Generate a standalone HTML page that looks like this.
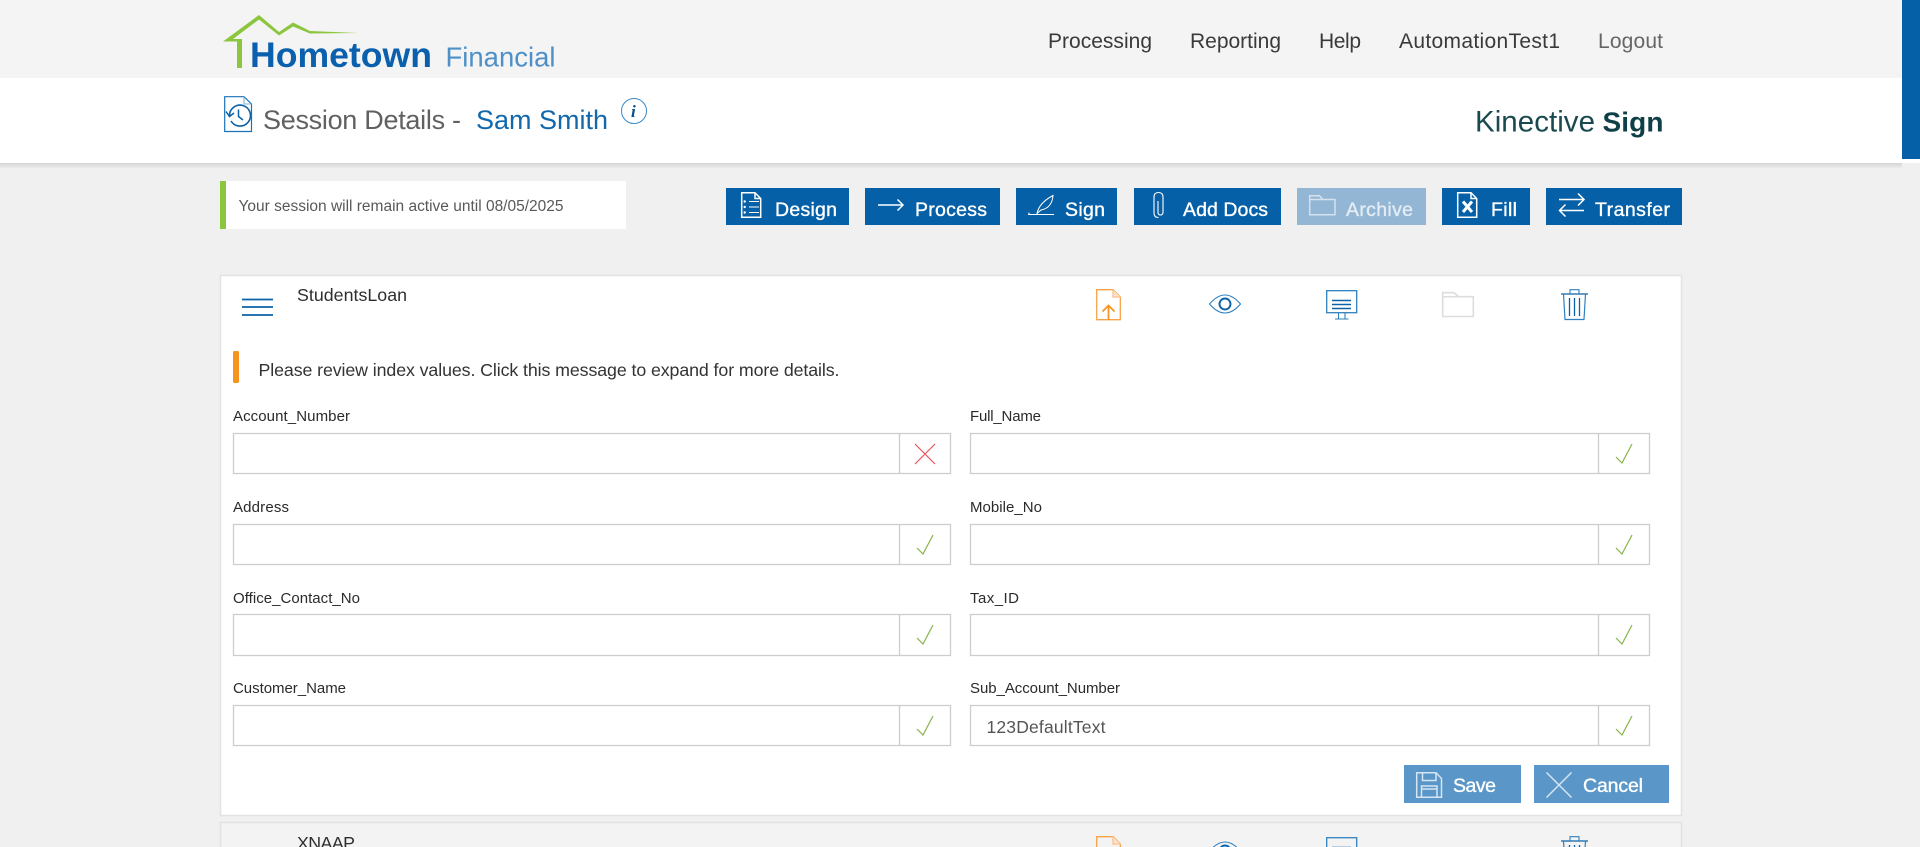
<!DOCTYPE html>
<html lang="en"><head><meta charset="utf-8"><title>Session Details - Sam Smith</title>
<style>
html,body{margin:0;padding:0;width:1920px;height:847px;overflow:hidden;background:#f0f0f0}
svg{display:block;position:absolute;left:0;top:0}
text{font-family:"Liberation Sans",sans-serif}
.nav{font-size:21px;fill:#3a3a3a}
.btn{font-size:19.500px;fill:#fff;stroke:#fff;stroke-width:.35px}
.lab{font-size:15px;fill:#2a2a2a}
.ic{fill:none;stroke-width:1.5}
</style></head><body>
<svg width="1920" height="847" viewBox="0 0 1920 847" xmlns="http://www.w3.org/2000/svg">
<defs>
<linearGradient id="sh" x1="0" y1="0" x2="0" y2="1"><stop offset="0" stop-color="#d4d4d4"/><stop offset="1" stop-color="#f0f0f0"/></linearGradient>
<g id="chk"><path d="M0 13L6 19L16 0" fill="none" stroke="#86b44a" stroke-width="1.2"/></g>
<g id="upl" class="ic">
<path d="M1096.700 289.700H1113L1120.300 297V319.700H1096.700Z" stroke="#f9a24a" stroke-width="1.300"/>
<path d="M1113 289.700V297H1120.300" stroke="#f9c89a" fill="#fde3cb"/>
<path d="M1108.500 320V306M1102.500 311.500L1108.500 305.500L1114.500 311.500" stroke="#f7931e" stroke-width="1.700"/>
</g>
<g id="eye" class="ic">
<path d="M1209.500 304Q1225 286 1240.500 304Q1225 322 1209.500 304Z" stroke="#2f80bf" stroke-width="1.100"/>
<circle cx="1225" cy="304" r="5.500" stroke="#0b62a8" stroke-width="1.900"/>
</g>
<g id="mon" class="ic">
<rect x="1326.700" y="290.700" width="30" height="22" stroke="#2f80bf" stroke-width="1.300"/>
<path d="M1332 300.500H1351M1332 304.500H1351M1332 308.500H1351" stroke="#0b62a8" stroke-width="1.600"/>
<path d="M1338.500 313V318.500M1345 313V318.500M1335 319H1348.500" stroke="#2f80bf" stroke-width="1.100"/>
</g>
<g id="tra" class="ic">
<path d="M1561 294H1588" stroke="#0b62a8" stroke-width="1.300"/>
<path d="M1570 294V289.700H1579V294" stroke="#2f80bf" stroke-width="1.100"/>
<path d="M1563.500 294L1565 319.500H1584L1585.500 294" stroke="#2f80bf" stroke-width="1.200"/>
<path d="M1569.500 298V316M1574.500 298V316M1579.500 298V316" stroke="#0b62a8" stroke-width="1.300"/>
</g>
</defs>

<!-- top header -->
<rect x="0" y="0" width="1920" height="78" fill="#f4f4f4"/>
<rect x="0" y="78" width="1920" height="85" fill="#fff"/>
<rect x="0" y="163" width="1902" height="6" fill="url(#sh)"/>
<rect x="1902" y="0" width="18" height="159" fill="#0560a8"/>

<!-- logo -->
<path d="M223 41.500L259 15L279 32L293 22.500L310 31L358 33L310 33.500L293 26.500L279 35.500L259 19.500L233 39H242V68H237V41.500Z" fill="#8cc63f"/>
<text x="250" y="67" font-size="35.500" font-weight="700" fill="#0a60ad" textLength="182" lengthAdjust="spacingAndGlyphs">Hometown</text>
<text x="445.500" y="66.500" font-size="28" fill="#4d8fc6" textLength="110" lengthAdjust="spacingAndGlyphs">Financial</text>

<!-- nav -->
<text class="nav" x="1048" y="48" textLength="104">Processing</text>
<text class="nav" x="1190" y="48" textLength="91">Reporting</text>
<text class="nav" x="1319" y="48" textLength="42">Help</text>
<text class="nav" x="1399" y="48" textLength="161">AutomationTest1</text>
<text class="nav" x="1598" y="48" textLength="65" style="fill:#666">Logout</text>

<!-- title -->
<g class="ic">
<path d="M224.700 96.700H244L251.500 104V131.500H224.700Z" stroke="#1a72b8" stroke-width="1.200"/>
<path d="M244 96.700V104H251.500" stroke="#7fb4dc" stroke-width="1.100"/>
<path d="M229.500 116A10.500 10.500 0 1 1 231 121" stroke="#0b62a8" stroke-width="1.600"/>
<path d="M226 111.500L229.500 116.500L234 113" stroke="#0b62a8" stroke-width="1.500"/>
<path d="M238.500 109.500V116.500L243 120" stroke="#0b62a8" stroke-width="1.500"/>
</g>
<text x="263" y="129" font-size="27" fill="#616161" textLength="198">Session Details -</text>
<text x="476" y="129" font-size="27" fill="#1268ad" textLength="132">Sam Smith</text>
<circle cx="634" cy="111" r="12.500" fill="none" stroke="#3a8ac6" stroke-width="1"/>
<text x="631" y="117" font-size="17" font-weight="700" font-style="italic" fill="#0b4f8a" style="font-family:'Liberation Serif',serif">i</text>
<text x="1475" y="131.500" font-size="29.500" fill="#1a4a50" textLength="120">Kinective</text>
<text x="1602.500" y="131.500" font-size="28" font-weight="700" fill="#0f4047" textLength="61">Sign</text>

<!-- notice -->
<rect x="220" y="181" width="406" height="48" fill="#fff"/>
<rect x="220" y="181" width="6" height="48" fill="#8cc63f"/>
<text x="238.500" y="211" font-size="15.500" fill="#595959" textLength="325">Your session will remain active until 08/05/2025</text>

<!-- action buttons -->
<rect x="726" y="188" width="123" height="37" fill="#0560a8"/>
<rect x="865" y="188" width="135" height="37" fill="#0560a8"/>
<rect x="1016" y="188" width="101" height="37" fill="#0560a8"/>
<rect x="1134" y="188" width="147" height="37" fill="#0560a8"/>
<rect x="1297" y="188" width="129" height="37" fill="#93b6d4"/>
<rect x="1442" y="188" width="88" height="37" fill="#0560a8"/>
<rect x="1546" y="188" width="136" height="37" fill="#0560a8"/>
<text class="btn" x="775" y="216" textLength="62">Design</text>
<text class="btn" x="915" y="216" textLength="72">Process</text>
<text class="btn" x="1065" y="216" textLength="40">Sign</text>
<text class="btn" x="1183" y="216" textLength="85">Add Docs</text>
<text class="btn" x="1346" y="216" textLength="67" style="fill:#e4edf5;stroke:#e4edf5">Archive</text>
<text class="btn" x="1491" y="216" textLength="26">Fill</text>
<text class="btn" x="1595" y="216" textLength="75">Transfer</text>
<g class="ic" stroke="#fff" stroke-width="1.200">
<path d="M741.700 192.700H755L760.700 198.500V217.300H741.700Z"/><path d="M755 192.700V198.500H760.700"/>
<path d="M749 201.500H759M749 207H759M749 212.500H759" stroke-width="1.100"/>
<circle cx="744.700" cy="201.500" r="1.200" fill="#fff" stroke="none"/><circle cx="744.700" cy="207" r="1.200" fill="#fff" stroke="none"/><circle cx="744.700" cy="212.500" r="1.200" fill="#fff" stroke="none"/>
<path d="M878 205H902.500M897.500 199.500L903 205L897.500 210.500"/>
<path d="M1028 214.500H1054M1029 214V212.500" stroke-width="1"/>
<path d="M1037 213.500Q1039 203 1053 195.500Q1052 208 1041 210Z" stroke-width="1"/>
<path d="M1158 201V212Q1158 215 1160.500 215Q1163 215 1163 212V197Q1163 192.500 1158.500 192.500Q1154 192.500 1154 197V213Q1154 217.500 1158.500 217.500" stroke-width="1.100"/>
<path d="M1457.700 192.700H1471L1476.700 198.500V217.300H1457.700Z"/><path d="M1471 192.700V198.500H1476.700"/>
<path d="M1463 201.500L1472 212M1472 201.500L1463 212" stroke-width="3"/>
<path d="M1559 199.500H1583.500M1578 193.500L1584 199.500L1578 205.500"/>
<path d="M1584 210.500H1560M1565.500 204.500L1559.500 210.500L1565.500 216.500"/>
</g>
<g class="ic" stroke="#d5e2ee" stroke-width="1.200"><path d="M1309.700 214.700V195.700H1319.500L1323 199.500H1335V214.700Z"/><path d="M1309.700 199.500H1323"/></g>

<!-- card 1 -->
<rect x="220.500" y="275.500" width="1461" height="540" fill="#fff" stroke="#e2e2e2" stroke-width="1.500"/>
<path d="M242 299.500H273M242 307H273M242 315H273" stroke="#0b62a8" stroke-width="1.700" fill="none"/>
<text x="297" y="301" font-size="17.800" fill="#2e2e2e" textLength="110">StudentsLoan</text>
<use href="#upl"/><use href="#eye"/><use href="#mon"/><use href="#tra"/>
<g class="ic" stroke="#dedcdc"><path d="M1442.700 316.500V292.700H1454L1458.500 296.700H1473.300V316.500Z" stroke-width="1.600"/><path d="M1442.700 296.700H1458.500"/></g>

<rect x="233" y="351" width="6" height="32" rx="1.500" fill="#f7931e"/>
<text x="258.500" y="376" font-size="17.800" fill="#333" textLength="581">Please review index values. Click this message to expand for more details.</text>

<!-- labels -->
<text class="lab" x="233" y="421" textLength="117">Account_Number</text>
<text class="lab" x="233" y="512" textLength="56">Address</text>
<text class="lab" x="233" y="603" textLength="127">Office_Contact_No</text>
<text class="lab" x="233" y="693" textLength="113">Customer_Name</text>
<text class="lab" x="970" y="421" textLength="71">Full_Name</text>
<text class="lab" x="970" y="512" textLength="72">Mobile_No</text>
<text class="lab" x="970" y="603" textLength="49">Tax_ID</text>
<text class="lab" x="970" y="693" textLength="150">Sub_Account_Number</text>

<!-- inputs -->
<g fill="#fff" stroke="#cdcdcd" stroke-width="1.300">
<rect x="233.500" y="433.500" width="717" height="40"/><path d="M899.500 433.500V473.500"/>
<rect x="233.500" y="524.500" width="717" height="40"/><path d="M899.500 524.500V564.500"/>
<rect x="233.500" y="614.500" width="717" height="41"/><path d="M899.500 614.500V655.500"/>
<rect x="233.500" y="705.500" width="717" height="40"/><path d="M899.500 705.500V745.500"/>
<rect x="970.500" y="433.500" width="679" height="40"/><path d="M1598.500 433.500V473.500"/>
<rect x="970.500" y="524.500" width="679" height="40"/><path d="M1598.500 524.500V564.500"/>
<rect x="970.500" y="614.500" width="679" height="41"/><path d="M1598.500 614.500V655.500"/>
<rect x="970.500" y="705.500" width="679" height="40"/><path d="M1598.500 705.500V745.500"/>
</g>
<path d="M915 444L935 464M935 444L915 464" stroke="#e8505b" stroke-width="1.200" fill="none"/>
<use href="#chk" x="917" y="535"/><use href="#chk" x="917" y="625"/><use href="#chk" x="917" y="716"/>
<use href="#chk" x="1616" y="444"/><use href="#chk" x="1616" y="535"/><use href="#chk" x="1616" y="625"/><use href="#chk" x="1616" y="716"/>
<text x="986.500" y="733" font-size="17.500" fill="#555" textLength="119">123DefaultText</text>

<!-- save / cancel -->
<rect x="1404" y="765" width="117" height="38" fill="#5a96c8"/>
<rect x="1534" y="765" width="135" height="38" fill="#5a96c8"/>
<g class="ic" stroke="#d6e5f2">
<path d="M1416.700 772.700H1436L1441.500 778.500V797.300H1416.700Z"/>
<path d="M1422.500 773V780.500H1436V773M1421.500 797V786H1437V797M1421.500 789H1437"/>
<path d="M1546.500 772.500L1571.500 797.500M1571.500 772.500L1546.500 797.500"/>
</g>
<text class="btn" x="1453" y="792" textLength="43">Save</text>
<text class="btn" x="1583" y="792" textLength="60">Cancel</text>

<!-- card 2 -->
<rect x="220.500" y="822.500" width="1461" height="40" fill="#f3f3f3" stroke="#e2e2e2" stroke-width="1.500"/>
<text x="297" y="849" font-size="17.800" fill="#2e2e2e" textLength="58">XNAAP</text>
<g transform="translate(0 547)"><use href="#upl"/><use href="#eye"/><use href="#mon"/><use href="#tra"/></g>
</svg>
</body></html>
